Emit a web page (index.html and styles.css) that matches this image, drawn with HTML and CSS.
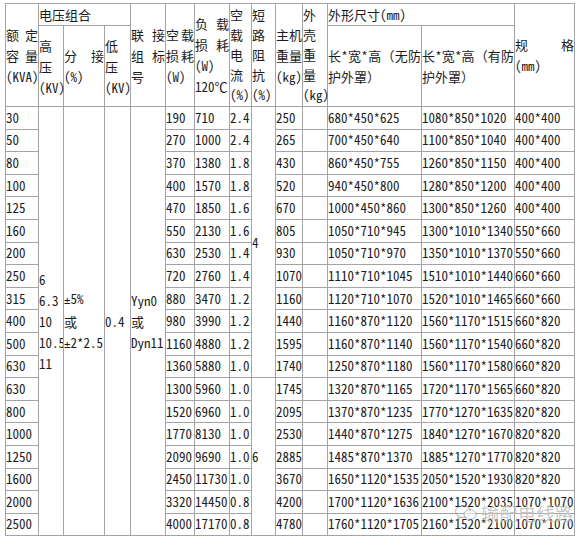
FILE: index.html
```html
<!DOCTYPE html>
<html lang="zh-CN">
<head>
<meta charset="utf-8">
<title>变压器参数表</title>
<link rel="stylesheet" href="styles.css">
</head>
<body>
<div class="page">
<table class="spec">
<colgroup>
<col class="c1"><col class="c2"><col class="c3"><col class="c4"><col class="c5"><col class="c6"><col class="c7"><col class="c8"><col class="c9"><col class="c10"><col class="c11"><col class="c12"><col class="c13"><col class="c14">
</colgroup>
<thead>
<tr class="h1">
<th rowspan="2">额定容量(KVA)</th>
<th colspan="3" class="grp">电压组合</th>
<th rowspan="2">联接组标号</th>
<th rowspan="2">空载损耗(W)</th>
<th rowspan="2">负载损耗(W) 120℃</th>
<th rowspan="2" class="tight">空载电流(%)</th>
<th rowspan="2" class="tight">短路阻抗(%)</th>
<th rowspan="2">主机重量(kg)</th>
<th rowspan="2" class="tight">外壳重量(kg)</th>
<th colspan="2" class="grp">外形尺寸(mm)</th>
<th rowspan="2"><span class="jl">规格</span>(mm)</th>
</tr>
<tr class="h2">
<th>高压(KV)</th>
<th>分接(%)</th>
<th>低压(KV)</th>
<th>长*宽*高（无防护外罩）</th>
<th>长*宽*高（有防护外罩）</th>
</tr>
</thead>
<tbody>
<tr><td>30</td><td rowspan="19" class="mid">6<br>6.3<br>10<br>10.5<br>11</td><td rowspan="19" class="mid"><span class="pm">±</span>5%<br>或<br><span class="pm">±</span>2*2.5</td><td rowspan="19" class="mid">0.4</td><td rowspan="19" class="mid">Yyn0<br>或<br>Dyn11</td><td>190</td><td>710</td><td>2.4</td><td rowspan="12" class="mid">4</td><td>250</td><td></td><td>680*450*625</td><td>1080*850*1020</td><td>400*400</td></tr>
<tr><td>50</td><td>270</td><td>1000</td><td>2.4</td><td>265</td><td></td><td>700*450*640</td><td>1100*850*1040</td><td>400*400</td></tr>
<tr><td>80</td><td>370</td><td>1380</td><td>1.8</td><td>430</td><td></td><td>860*450*755</td><td>1260*850*1150</td><td>400*400</td></tr>
<tr><td>100</td><td>400</td><td>1570</td><td>1.8</td><td>520</td><td></td><td>940*450*800</td><td>1280*850*1200</td><td>400*400</td></tr>
<tr><td>125</td><td>470</td><td>1850</td><td>1.6</td><td>670</td><td></td><td>1000*450*860</td><td>1300*850*1260</td><td>400*400</td></tr>
<tr><td>160</td><td>550</td><td>2130</td><td>1.6</td><td>805</td><td></td><td>1050*710*945</td><td>1300*1010*1340</td><td>550*660</td></tr>
<tr><td>200</td><td>630</td><td>2530</td><td>1.4</td><td>930</td><td></td><td>1050*710*970</td><td>1350*1010*1370</td><td>550*660</td></tr>
<tr><td>250</td><td>720</td><td>2760</td><td>1.4</td><td>1070</td><td></td><td>1110*710*1045</td><td>1510*1010*1440</td><td>660*660</td></tr>
<tr><td>315</td><td>880</td><td>3470</td><td>1.2</td><td>1160</td><td></td><td>1120*710*1070</td><td>1520*1010*1465</td><td>660*660</td></tr>
<tr><td>400</td><td>980</td><td>3990</td><td>1.2</td><td>1440</td><td></td><td>1160*870*1120</td><td>1560*1170*1515</td><td>660*820</td></tr>
<tr><td>500</td><td>1160</td><td>4880</td><td>1.2</td><td>1595</td><td></td><td>1160*870*1140</td><td>1560*1170*1540</td><td>660*820</td></tr>
<tr><td>630</td><td>1360</td><td>5880</td><td>1.0</td><td>1740</td><td></td><td>1250*870*1180</td><td>1560*1170*1580</td><td>660*820</td></tr>
<tr><td>630</td><td>1300</td><td>5960</td><td>1.0</td><td rowspan="7" class="mid">6</td><td>1745</td><td></td><td>1320*870*1165</td><td>1720*1170*1565</td><td>660*820</td></tr>
<tr><td>800</td><td>1520</td><td>6960</td><td>1.0</td><td>2095</td><td></td><td>1370*870*1235</td><td>1770*1270*1635</td><td>820*820</td></tr>
<tr><td>1000</td><td>1770</td><td>8130</td><td>1.0</td><td>2530</td><td></td><td>1440*870*1275</td><td>1840*1270*1670</td><td>820*820</td></tr>
<tr><td>1250</td><td>2090</td><td>9690</td><td>1.0</td><td>2885</td><td></td><td>1485*870*1370</td><td>1885*1270*1770</td><td>820*820</td></tr>
<tr><td>1600</td><td>2450</td><td>11730</td><td>1.0</td><td>3670</td><td></td><td>1650*1120*1535</td><td>2050*1520*1930</td><td>820*820</td></tr>
<tr><td>2000</td><td>3320</td><td>14450</td><td>0.8</td><td>4200</td><td></td><td>1700*1120*1636</td><td>2100*1520*2035</td><td>1070*1070</td></tr>
<tr><td>2500</td><td>4000</td><td>17170</td><td>0.8</td><td>4780</td><td></td><td>1760*1120*1705</td><td>2160*1520*2100</td><td>1070*1070</td></tr>
</tbody>
</table>
<div class="watermark">
<svg class="wm-icon" viewBox="0 0 24 18" width="24" height="18" aria-hidden="true">
<ellipse cx="9" cy="7.5" rx="7.5" ry="6" fill="none" stroke="currentColor" stroke-width="1.3"/>
<path d="M4.5 12.2 L3.5 15.5 L7.5 13.2" fill="none" stroke="currentColor" stroke-width="1.2"/>
<ellipse cx="16" cy="10.5" rx="6" ry="4.8" fill="#fff" fill-opacity="0.6" stroke="currentColor" stroke-width="1.2"/>
</svg>
<span class="wm-text">输配电线路</span>
</div>
</div>
</body>
</html>
```
FILE: styles.css
```css
html, body {
  margin: 0;
  padding: 0;
  background: #ffffff;
}

body {
  font-family: "Noto Sans Mono CJK SC", "Noto Sans CJK SC", monospace;
  font-size: 13px;
  color: #1c1c1c;
}

.page {
  position: relative;
  padding: 3px 0 0 5px;
}

.spec {
  border-collapse: collapse;
  table-layout: fixed;
  width: 569px;
}

.c1 { width: 33px; }
.c2 { width: 25px; }
.c3 { width: 41px; }
.c4 { width: 26px; }
.c5 { width: 35px; }
.c6 { width: 29px; }
.c7 { width: 35px; }
.c8 { width: 22px; }
.c9 { width: 24px; }
.c10 { width: 27px; }
.c11 { width: 25px; }
.c12 { width: 94px; }
.c13 { width: 93px; }
.c14 { width: 60px; }

.spec th,
.spec td {
  border: 1px solid #a4a4a4;
  padding: 0;
  font-weight: normal;
  text-align: left;
  vertical-align: middle;
}

.spec th {
  text-align: justify;
  line-height: 21px;
  word-break: normal;
}

.spec th.tight {
  line-height: 20px;
}

.spec th.grp {
  text-align: left;
}

.spec .h1 { height: 20px; }
.spec .h2 { height: 81px; }

.jl {
  display: block;
  text-align: justify;
  text-align-last: justify;
}

.spec td {
  height: 21.6px;
  white-space: nowrap;
  overflow: hidden;
  line-height: 16px;
}

.spec td.mid {
  line-height: 21px;
}

.pm {
  font-family: "DejaVu Sans Mono", monospace;
  font-size: 10.8px;
}

.watermark {
  position: absolute;
  left: 454px;
  top: 502px;
  display: flex;
  align-items: center;
  gap: 3px;
  color: rgba(120, 120, 120, 0.42);
  pointer-events: none;
}

.wm-icon {
  display: block;
}

.wm-text {
  font-family: "Noto Sans CJK SC", sans-serif;
  font-size: 18px;
  line-height: 22px;
  letter-spacing: 0.5px;
  text-shadow: 0 0 1px rgba(255, 255, 255, 0.8);
}
```
